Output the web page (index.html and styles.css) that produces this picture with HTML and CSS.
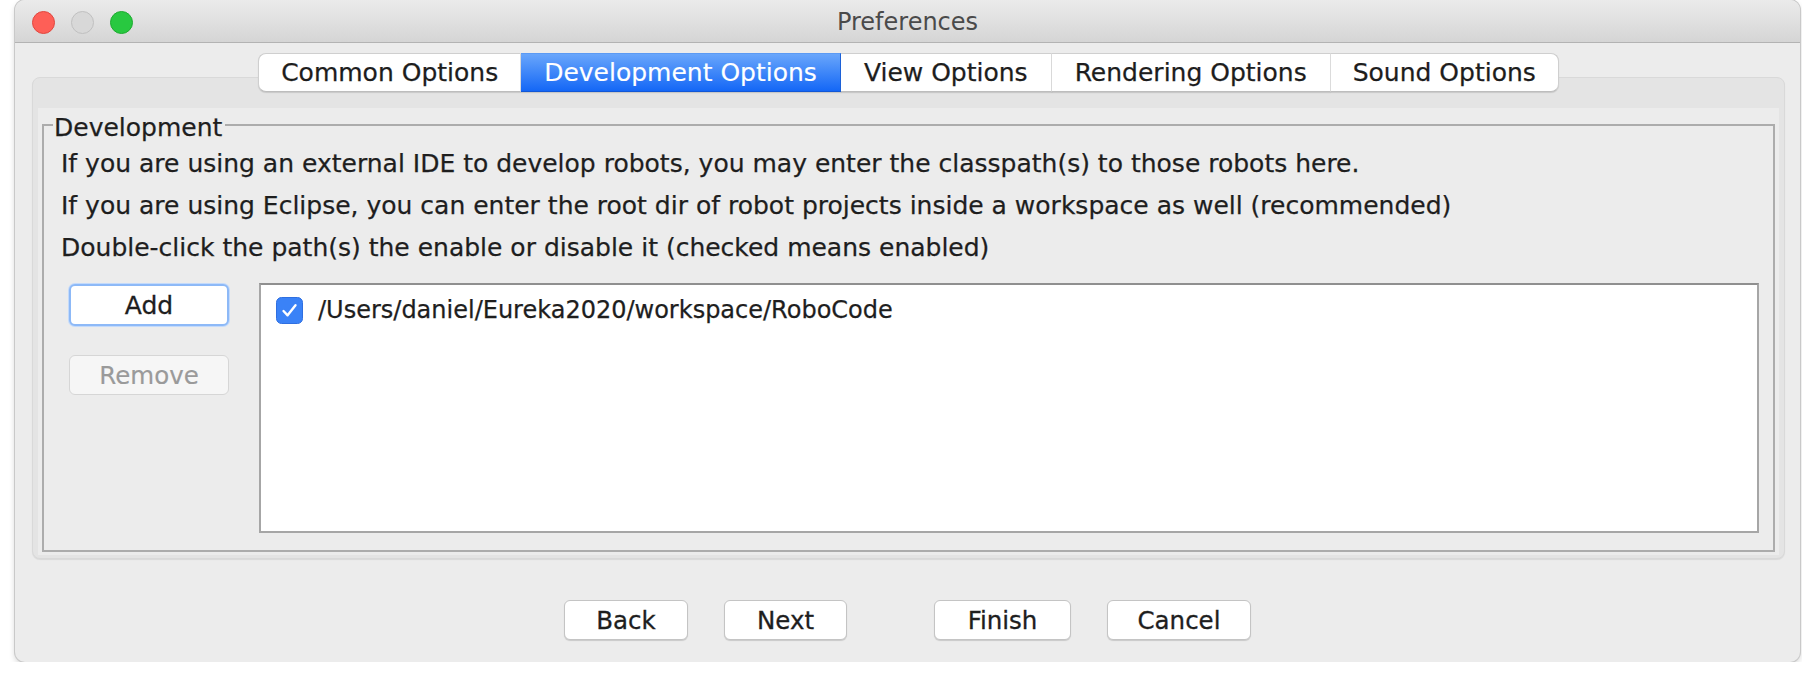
FILE: index.html
```html
<!DOCTYPE html>
<html>
<head>
<meta charset="utf-8">
<title>Preferences</title>
<link rel="stylesheet" href="styles.css">
</head>
<body>
<div class="window">
  <div class="titlebar">
    <div class="lights">
      <span class="light red"></span>
      <span class="light gray"></span>
      <span class="light green"></span>
    </div>
    <div class="title">Preferences</div>
  </div>
  <div class="content">
    <div class="tabs">
      <div class="tab first">Common Options</div>
      <div class="tab selected">Development Options</div>
      <div class="tab">View Options</div>
      <div class="tab">Rendering Options</div>
      <div class="tab last">Sound Options</div>
    </div>
    <div class="panel">
      <div class="panel-inner">
        <fieldset class="group">
          <legend class="group-title">Development</legend>
          <div class="desc">
            <p>If you are using an external IDE to develop robots, you may enter the classpath(s) to those robots here.</p>
            <p>If you are using Eclipse, you can enter the root dir of robot projects inside a workspace as well (recommended)</p>
            <p>Double-click the path(s) the enable or disable it (checked means enabled)</p>
          </div>
          <div class="editor">
            <div class="side-buttons">
              <button class="btn btn-add">Add</button>
              <button class="btn btn-remove" disabled>Remove</button>
            </div>
            <div class="list">
              <div class="list-item">
                <svg class="check" width="27" height="27" viewBox="0 0 27 27">
                  <rect x="0.5" y="0.5" width="26" height="26" rx="5" fill="#3a82f7" stroke="#2f6fe0"/>
                  <path d="M7.5 14 L11.6 18.3 L19.5 8.2" fill="none" stroke="#fff" stroke-width="2.4" stroke-linecap="round" stroke-linejoin="round"/>
                </svg>
                <span class="path">/Users/daniel/Eureka2020/workspace/RoboCode</span>
              </div>
            </div>
          </div>
        </fieldset>
      </div>
    </div>
    <div class="footer">
      <div class="pair">
        <button class="btn btn-back">Back</button>
        <button class="btn btn-next">Next</button>
      </div>
      <div class="pair">
        <button class="btn btn-finish">Finish</button>
        <button class="btn btn-cancel">Cancel</button>
      </div>
    </div>
  </div>
</div>
</body>
</html>
```
FILE: styles.css
```css
html, body {
  margin: 0;
  padding: 0;
  background: #ffffff;
}
body {
  font-family: "DejaVu Sans", "Liberation Sans", sans-serif;
  color: #1e1e1e;
}
.window {
  margin-left: 15px;
  width: 1785px;
  height: 662px;
  background: #ececec;
  border-radius: 10px;
  box-shadow: 0 0 0 1px #c9c9c9, 0 3px 6px rgba(0,0,0,0.18);
  overflow: hidden;
}
.titlebar {
  height: 42px;
  border-bottom: 1px solid #b3b3b3;
  background: linear-gradient(#ebebeb, #d5d5d5);
  display: flex;
  align-items: center;
  position: relative;
}
.lights {
  display: flex;
  gap: 16px;
  padding-left: 17px;
  padding-top: 2px;
}
.light {
  width: 23px;
  height: 23px;
  border-radius: 50%;
  box-sizing: border-box;
}
.light.red { background: #fe5f57; border: 1px solid #e1473f; }
.light.gray { background: #d8d8d8; border: 1px solid #c0c0c0; }
.light.green { background: #28c840; border: 1px solid #1dab2f; }
.title {
  position: absolute;
  left: 0;
  right: 0;
  top: 8px;
  text-align: center;
  font-size: 24px;
  color: #4a4a4a;
}
.content {
  padding: 10px 15px 0 17px;
}
.tabs {
  display: flex;
  justify-content: center;
  position: relative;
  z-index: 1;
  height: 39px;
}
.tab {
  height: 37px;
  line-height: 38px;
  padding: 0 23px;
  background: #ffffff;
  border-top: 1px solid #cfcfcf;
  border-bottom: 1px solid #bdbdbd;
  border-right: 1px solid #dedede;
  font-size: 25px;
  color: #1d1d1d;
  -webkit-text-stroke: 0.25px #1d1d1d;
  box-shadow: 0 1px 1px rgba(0,0,0,0.12);
}
.tab.first {
  border-left: 1px solid #cfcfcf;
  border-radius: 8px 0 0 8px;
  padding: 0 22px;
}
.tab.last {
  border-right: 1px solid #cfcfcf;
  border-radius: 0 8px 8px 0;
  padding: 0 22px;
}
.tab.selected {
  background: linear-gradient(#69a6fb, #1467f6);
  color: #ffffff;
  -webkit-text-stroke: 0.15px #ffffff;
  border-top-color: #5b9af4;
  border-bottom-color: #1257d6;
  border-right-color: #1d63dc;
}
.panel {
  margin-top: -15px;
  height: 482px;
  box-sizing: border-box;
  background: #e4e4e4;
  border: 1px solid #d9d9d9;
  border-radius: 8px;
  padding: 32px 5px 4px 5px;
  box-shadow: 0 1px 1px rgba(0,0,0,0.08);
}
.panel-inner {
  background: #ececec;
  padding: 0 4px 3px 4px;
}
.group {
  margin: -2px 0 0 0;
  border: 2px solid #acacac;
  padding: 1px 14px 17px 17px;
  min-width: 0;
}
.group-title {
  font-size: 25px;
  line-height: 28px;
  padding: 6px 3px 0 1px;
  margin-left: -8px;
  color: #1e1e1e;
  -webkit-text-stroke: 0.25px #1e1e1e;
}
.desc p {
  margin: 0;
  font-size: 25px;
  line-height: 42px;
  white-space: nowrap;
  -webkit-text-stroke: 0.25px #1e1e1e;
}
.editor {
  display: flex;
  gap: 30px;
  margin-top: 14px;
}
.side-buttons {
  display: flex;
  flex-direction: column;
  gap: 29px;
  padding-left: 8px;
  padding-top: 1px;
}
.btn {
  font-family: "DejaVu Sans", "Liberation Sans", sans-serif;
  font-size: 24.5px;
  color: #1e1e1e;
  -webkit-text-stroke: 0.3px #1e1e1e;
  background: #ffffff;
  border: 1px solid #c4c4c4;
  border-radius: 6px;
  box-shadow: 0 1px 1px rgba(0,0,0,0.15);
  height: 40px;
  padding: 0;
}
.btn-add {
  width: 160px;
  height: 42px;
  font-size: 25px;
  border: 2px solid #8db9f7;
  box-shadow: 0 0 0 1px #c3dafb;
}
.btn-remove {
  width: 160px;
  background: #f6f6f6;
  color: #9a9a9a;
  -webkit-text-stroke: 0.2px #9a9a9a;
  border-color: #d6d6d6;
  box-shadow: none;
}
.list {
  width: 1500px;
  height: 250px;
  box-sizing: border-box;
  background: #ffffff;
  border: 2px solid #a6a6a6;
  border-top-color: #8f8f8f;
  padding: 11px 15px;
}
.list-item {
  display: flex;
  align-items: center;
  gap: 15px;
}
.check {
  display: block;
  flex: none;
}
.path {
  font-size: 24px;
  color: #1e1e1e;
  -webkit-text-stroke: 0.25px #1e1e1e;
}
.footer {
  display: flex;
  justify-content: center;
  gap: 87px;
  padding-top: 41px;
  padding-right: 2px;
}
.pair {
  display: flex;
  gap: 36px;
}
.btn-back { width: 124px; }
.btn-next { width: 123px; }
.btn-finish { width: 137px; }
.btn-cancel { width: 144px; }
```
